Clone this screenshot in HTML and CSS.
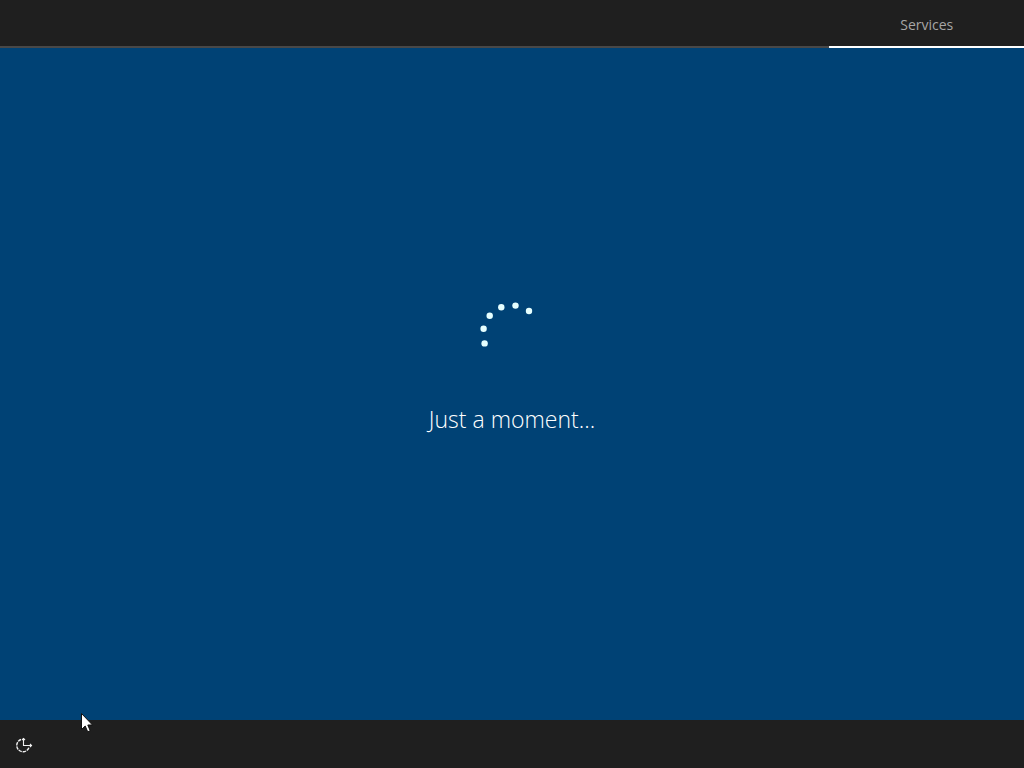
FILE: index.html
```html
<!DOCTYPE html>
<html lang="en">
  <head>
    <meta charset="UTF-8" />
    <meta name="viewport" content="width=device-width, initial-scale=1.0" />
    <title>Setup</title>
    <link rel="stylesheet" href="styles.css" />
  </head>
  <body>
    <header class="top-bar">
      <nav class="steps">
        <a href="#services" class="step active" aria-current="step">Services</a>
      </nav>
    </header>

    <main class="content">
      <svg class="spinner" viewBox="0 0 70 70" aria-hidden="true">
        <circle cx="52" cy="11" r="3.2" />
        <circle cx="38.5" cy="5.6" r="3.2" />
        <circle cx="24.3" cy="7.3" r="3.2" />
        <circle cx="12.7" cy="15.7" r="3.2" />
        <circle cx="6.6" cy="28.8" r="3.2" />
        <circle cx="7.6" cy="43.4" r="3.2" />
      </svg>
      <p class="status" role="status">Just a moment...</p>
    </main>

    <footer class="bottom-bar">
      <button type="button" class="access-btn" aria-label="Ease of access">
        <svg class="access-icon" viewBox="0 0 18 18" aria-hidden="true">
          <path class="ring" d="M6 4.5 A6.3 6.3 0 1 0 14 12.5" />
          <path d="M8.5 3 V10.5 H17" />
          <path d="M7 5 L8.5 3.5 L10 5 M15 9 L16.5 10.5 L15 12" />
        </svg>
      </button>
    </footer>

    <svg class="cursor" viewBox="0 0 12 20" aria-hidden="true">
      <path d="M0.5 0.5 V16.5 L4.2 13 L6.7 18.8 L9.2 17.7 L6.8 12 H11.5 Z" />
    </svg>
  </body>
</html>
```
FILE: styles.css
```css
* {
  margin: 0;
  padding: 0;
  box-sizing: border-box;
}

body {
  position: relative;
  display: flex;
  flex-direction: column;
  min-height: 100vh;
  font-family: "Open Sans", "Noto Sans", sans-serif;
  background-color: #004275;
  color: #fff;
}

/* Top bar */
.top-bar {
  background-color: #1f1f1f;
}

.steps {
  display: flex;
  justify-content: flex-end;
  height: 48px;
  box-shadow: inset 0 -2px #484848;
}

.step {
  width: 19%;
  border-bottom: 2px solid transparent;
  color: #a6a6a6;
  font-size: 14px;
  line-height: 50px;
  text-align: center;
  text-decoration: none;
}

.step.active {
  border-bottom-color: #fff;
}

/* Loading area */
.content {
  flex: 1;
  display: flex;
  flex-direction: column;
  align-items: center;
  justify-content: center;
  gap: 33px;
  padding-bottom: 33px;
}

.spinner {
  width: 70px;
  height: 70px;
  fill: #e6ffff;
}

.status {
  font-size: 23px;
  font-weight: 300;
  line-height: 32px;
}

/* Bottom bar */
.bottom-bar {
  display: flex;
  align-items: center;
  height: 48px;
  background-color: #1f1f1f;
}

.access-btn {
  display: flex;
  align-items: center;
  justify-content: center;
  width: 48px;
  height: 48px;
  border: none;
  background: none;
  cursor: pointer;
}

.access-icon {
  width: 18px;
  height: 18px;
  fill: none;
  stroke: #f0f0f0;
  stroke-width: 1.1;
}

.access-icon .ring {
  stroke-width: 1.4;
  stroke-dasharray: 3.4 0.9;
}

/* Mouse pointer */
.cursor {
  position: absolute;
  left: 81px;
  bottom: 35px;
  width: 12px;
  height: 20px;
  fill: #fff;
  stroke: #111;
  stroke-width: 1;
}
```
